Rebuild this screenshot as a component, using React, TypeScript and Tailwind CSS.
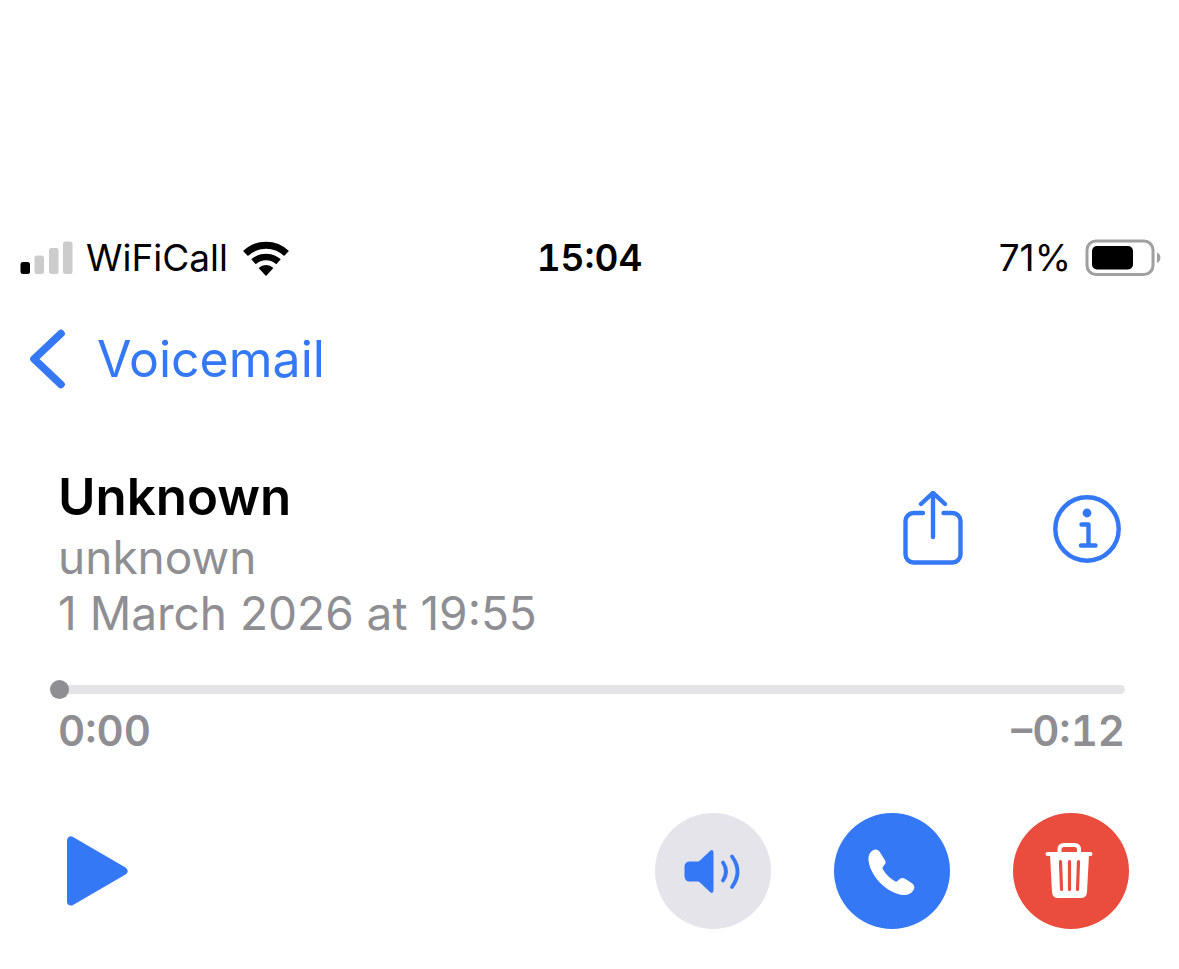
import React, { FC, useState } from 'react';

const DURATION = 12;

const formatTime = (seconds: number) =>
  `${Math.floor(seconds / 60)}:${String(seconds % 60).padStart(2, '0')}`;

const SignalIcon: FC = () => (
  <svg className="w-[56px] h-[36px] shrink-0" viewBox="0 0 56 36" aria-hidden="true">
    <rect x="2.5" y="22" width="9.5" height="12" rx="2.5" fill="#000" />
    <rect x="16.5" y="15.5" width="9.5" height="18.5" rx="2.5" fill="#cccccc" />
    <rect x="31" y="8" width="9.5" height="26" rx="2.5" fill="#cccccc" />
    <rect x="45" y="1.5" width="9.5" height="32.5" rx="2.5" fill="#cccccc" />
  </svg>
);

const WifiIcon: FC = () => (
  <svg className="w-[48px] h-[36px] shrink-0" viewBox="0 0 48 36" fill="none" stroke="#000" aria-hidden="true">
    <path d="M3.5 13.5A29.5 29.5 0 0 1 44.5 13.5" strokeWidth="7" />
    <path d="M11.5 21.8A18.5 18.5 0 0 1 36.5 21.8" strokeWidth="6.6" />
    <path d="M24 36l-7.4-8a10.5 10.5 0 0 1 14.8 0Z" fill="#000" stroke="none" />
  </svg>
);

const BatteryIcon: FC = () => (
  <svg className="w-[76px] h-[38px] shrink-0" viewBox="0 0 76 38" aria-hidden="true">
    <rect x="2" y="2" width="66" height="33.5" rx="9" fill="none" stroke="#a0a0a0" strokeWidth="3" />
    <rect x="7" y="7" width="41" height="23.5" rx="5" fill="#000" />
    <path d="M72 13.5c2.6 1 3.4 3 3.4 5.2s-.8 4.3-3.4 5.3z" fill="#a0a0a0" />
  </svg>
);

const BackIcon: FC = () => (
  <svg className="w-[36px] h-[60px] shrink-0" viewBox="0 0 36 60" fill="none" aria-hidden="true">
    <path d="M32 4.5L5 30l27 25.5" stroke="currentColor" strokeWidth="7.6" strokeLinecap="round" strokeLinejoin="round" />
  </svg>
);

const ShareIcon: FC = () => (
  <svg
    className="w-[60px] h-[76px]"
    viewBox="0 0 60 76"
    fill="none"
    stroke="currentColor"
    strokeWidth="4.4"
    strokeLinecap="round"
    strokeLinejoin="round"
    aria-hidden="true"
  >
    <path d="M20 22H10.5a8 8 0 0 0-8 8V63.5a8 8 0 0 0 8 8h39a8 8 0 0 0 8-8V30a8 8 0 0 0-8-8H40.5" />
    <path d="M30 46V2M18 13L30 1.8L42 13" />
  </svg>
);

const InfoIcon: FC = () => (
  <svg className="w-[68px] h-[68px]" viewBox="0 0 68 68" fill="none" stroke="currentColor" aria-hidden="true">
    <circle cx="34" cy="34" r="31.7" strokeWidth="4.4" />
    <circle cx="34" cy="18" r="4.4" fill="currentColor" stroke="none" />
    <path d="M28.5 29.5H35.5V50.5M28 50.5H42.5" strokeWidth="4.4" strokeLinecap="round" strokeLinejoin="round" />
  </svg>
);

const PlayIcon: FC = () => (
  <svg className="w-[62px] h-[72px]" viewBox="0 0 62 72" aria-hidden="true">
    <path
      d="M5 5.5V66.5L57.5 36Z"
      fill="currentColor"
      stroke="currentColor"
      strokeWidth="8"
      strokeLinejoin="round"
    />
  </svg>
);

const SpeakerIcon: FC = () => (
  <svg className="w-[116px] h-[116px]" viewBox="0 0 116 116" aria-hidden="true">
    <path
      d="M35 48.5H42.5Q44 48.5 45.2 47.3L55 38Q58.5 35.5 58.5 40V77Q58.5 81.5 55 79L45.2 69.7Q44 68.5 42.5 68.5H35Q29.5 68.5 29.5 63V54Q29.5 48.5 35 48.5Z"
      fill="currentColor"
    />
    <g fill="none" stroke="currentColor" strokeWidth="3.8" strokeLinecap="round">
      <path d="M68 49.5q6 9 0 18" />
      <path d="M77 43.5q11 15 0 30.5" />
    </g>
  </svg>
);

const PhoneIcon: FC = () => (
  <svg className="w-[116px] h-[116px]" viewBox="0 0 116 116" aria-hidden="true">
    <path
      d="M38.5 37.5C35.5 39.5 34 43 34.5 47.5C35.5 55.5 40 63.5 46.5 70.2C53.5 77.2 62.5 81.5 69.5 82C74 82.2 77.5 80.5 79.5 77C81 74.5 80.5 72 78 70.2L71 65.7C69 64.5 67 64.7 65.5 66.2L63.5 68C62.5 68.7 61.5 68.7 60.5 68C56 65.5 51.5 61 49 56.5C48.3 55.3 48.5 54.3 49.3 53.3L50.5 51.8C51.8 50.2 52 48.7 50.8 46.9L45.5 38.5C44 36 41 35.8 38.5 37.5Z"
      fill="currentColor"
    />
  </svg>
);

const TrashIcon: FC = () => (
  <svg className="w-[116px] h-[116px]" viewBox="0 0 116 116" aria-hidden="true">
    <path d="M37 41.5L39 79Q39.5 85 45 85H68Q73.5 85 74 79L76 41.5Z" fill="currentColor" />
    <path d="M34.5 41H77.5" stroke="currentColor" strokeWidth="4" strokeLinecap="round" />
    <path d="M46.5 41V36.5Q46.5 32 51 32H61.5Q66 32 66 36.5V41" fill="none" stroke="currentColor" strokeWidth="4" />
    <path d="M47.5 48.5L48.5 76.5M56.5 48.5V76.5M65.5 48.5L64.5 76.5" stroke="#ea4c3d" strokeWidth="3.2" strokeLinecap="round" />
  </svg>
);

const StatusBar: FC = () => (
  <header className="grid grid-cols-3 items-center h-10 px-[18px] text-[37px] leading-10 text-black">
    <div className="flex items-center gap-3">
      <SignalIcon />
      <div className="flex items-center gap-[14px]">
        <span>WiFiCall</span>
        <WifiIcon />
      </div>
    </div>
    <span className="text-center font-semibold tabular-nums">15:04</span>
    <div className="flex items-center justify-end gap-[14px]">
      <span>71%</span>
      <BatteryIcon />
    </div>
  </header>
);

const App: FC = () => {
  const [position, setPosition] = useState(0);

  return (
    <main className="min-h-screen bg-white pt-[238px] pb-10 font-['Inter','Liberation_Sans',sans-serif]">
      <StatusBar />

      <nav className="mt-[51px] flex px-[29px]">
        <a href="#voicemail" className="flex items-center gap-8 text-[50px] leading-[60px] text-[#3478f6]">
          <BackIcon />
          Voicemail
        </a>
      </nav>

      <section className="mt-[76px] px-[50px]">
        <div className="flex items-center justify-between px-2">
          <div>
            <h1 className="text-[51px] leading-[64px] font-semibold text-black">Unknown</h1>
            <p className="text-[46px] leading-[56px] text-[#8e8e93]">unknown</p>
            <p className="text-[46px] leading-[56px] text-[#8e8e93]">1 March 2026 at 19:55</p>
          </div>
          <div className="flex items-center gap-[90px] pb-12 text-[#3478f6]">
            <button type="button" aria-label="Share">
              <ShareIcon />
            </button>
            <button type="button" aria-label="Details">
              <InfoIcon />
            </button>
          </div>
        </div>

        <input
          type="range"
          aria-label="Playback position"
          min={0}
          max={DURATION}
          value={position}
          onChange={(e) => setPosition(Number(e.target.value))}
          className="mt-[38px] block h-5 w-full appearance-none bg-transparent pr-1 [&::-webkit-slider-runnable-track]:h-[9px] [&::-webkit-slider-runnable-track]:rounded-full [&::-webkit-slider-runnable-track]:bg-[#e4e4e6] [&::-webkit-slider-thumb]:-mt-[5px] [&::-webkit-slider-thumb]:size-[19px] [&::-webkit-slider-thumb]:appearance-none [&::-webkit-slider-thumb]:rounded-full [&::-webkit-slider-thumb]:bg-[#8e8e93]"
        />
        <div className="mt-2 flex justify-between pl-2 pr-1 text-[42px] leading-[48px] font-semibold tabular-nums text-[#8e8e93]">
          <span>{formatTime(position)}</span>
          <span>–{formatTime(DURATION - position)}</span>
        </div>

        <div className="mt-[58px] flex items-center justify-between pl-4">
          <button type="button" aria-label="Play" className="text-[#3478f6]">
            <PlayIcon />
          </button>
          <div className="flex gap-[63px]">
            <button type="button" aria-label="Speaker" className="rounded-full bg-[#e4e4ea] text-[#3478f6]">
              <SpeakerIcon />
            </button>
            <button type="button" aria-label="Call back" className="rounded-full bg-[#3478f6] text-white">
              <PhoneIcon />
            </button>
            <button type="button" aria-label="Delete" className="rounded-full bg-[#ea4c3d] text-white">
              <TrashIcon />
            </button>
          </div>
        </div>
      </section>
    </main>
  );
};

export default App;
